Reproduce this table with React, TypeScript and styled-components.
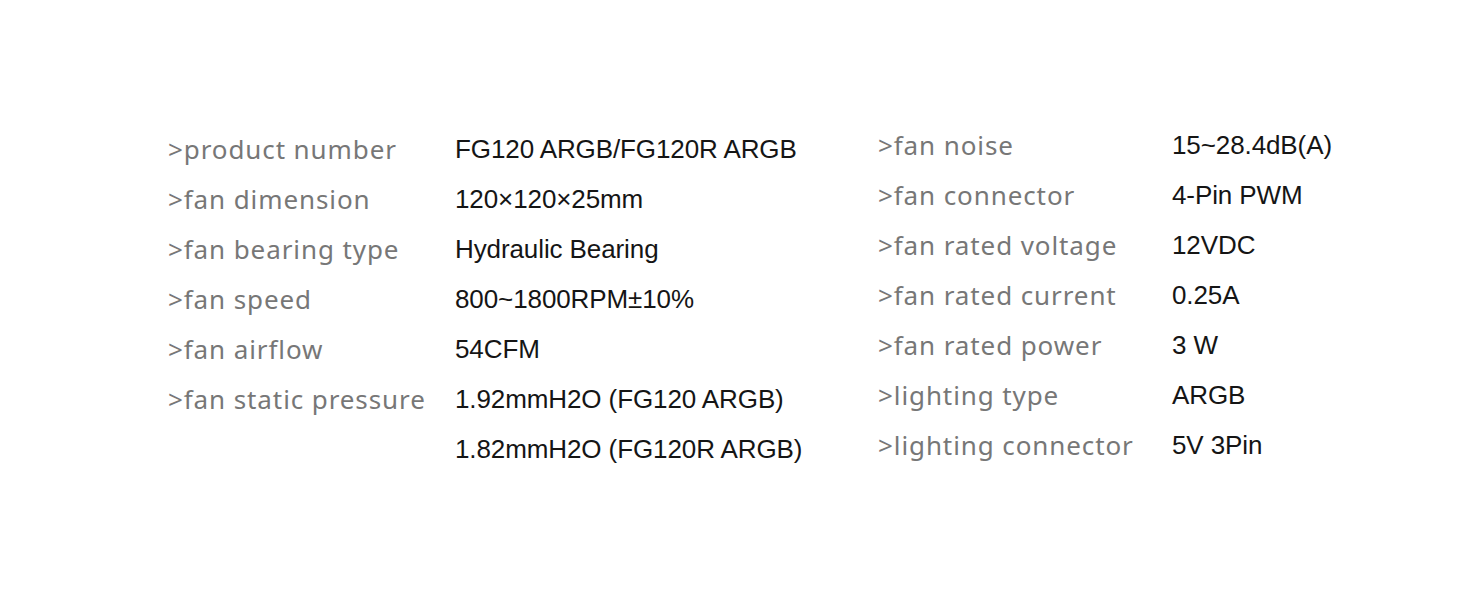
import styled, { createGlobalStyle } from "styled-components";

const GlobalStyle = createGlobalStyle`
  html, body {
    margin: 0;
    background: #ffffff;
  }
`

const leftSpecs = [
  { label: ">product number", value: "FG120 ARGB/FG120R ARGB" },
  { label: ">fan dimension", value: "120×120×25mm" },
  { label: ">fan bearing type", value: "Hydraulic Bearing" },
  { label: ">fan speed", value: "800~1800RPM±10%" },
  { label: ">fan airflow", value: "54CFM" },
  { label: ">fan static pressure", value: "1.92mmH2O (FG120 ARGB)" },
  { label: "", value: "1.82mmH2O (FG120R ARGB)" },
]

const rightSpecs = [
  { label: ">fan noise", value: "15~28.4dB(A)" },
  { label: ">fan connector", value: "4-Pin PWM" },
  { label: ">fan rated voltage", value: "12VDC" },
  { label: ">fan rated current", value: "0.25A" },
  { label: ">fan rated power", value: "3 W" },
  { label: ">lighting type", value: "ARGB" },
  { label: ">lighting connector", value: "5V 3Pin" },
]

const App = () => {
  return (
    <Page>
      <GlobalStyle />
      <SpecTable $labelWidth={287} $offset={4} $width={710}>
        {leftSpecs.map((s, i) => (
          <Row key={i}>
            <Label>{s.label}</Label>
            <Value>{s.value}</Value>
          </Row>
        ))}
      </SpecTable>
      <SpecTable $labelWidth={294} $offset={0}>
        {rightSpecs.map((s, i) => (
          <Row key={i}>
            <Label>{s.label}</Label>
            <Value>{s.value}</Value>
          </Row>
        ))}
      </SpecTable>
    </Page>
  )
}
export default App

const Page = styled.div`
  width: 1464px;
  height: 600px;
  box-sizing: border-box;
  padding: 120px 0 0 168px;
  display: flex;
  align-items: flex-start;
  background: #fff;
  font-family: "Liberation Sans", Arial, sans-serif;
`

const SpecTable = styled.div<{ $labelWidth: number; $offset: number; $width?: number }>`
  display: grid;
  grid-template-columns: ${p => p.$labelWidth}px auto;
  grid-auto-rows: 50px;
  margin-top: ${p => p.$offset}px;
  width: ${p => (p.$width ? `${p.$width}px` : "auto")};
`

const Row = styled.div`
  display: contents;
`

const Label = styled.div`
  display: flex;
  align-items: center;
  font-family: "Noto Sans", "Liberation Sans", sans-serif;
  font-size: 26px;
  letter-spacing: 0.9px;
  color: #777777;
  white-space: nowrap;
`

const Value = styled.div`
  display: flex;
  align-items: center;
  font-size: 26px;
  letter-spacing: -0.1px;
  color: #151515;
  white-space: nowrap;
`
